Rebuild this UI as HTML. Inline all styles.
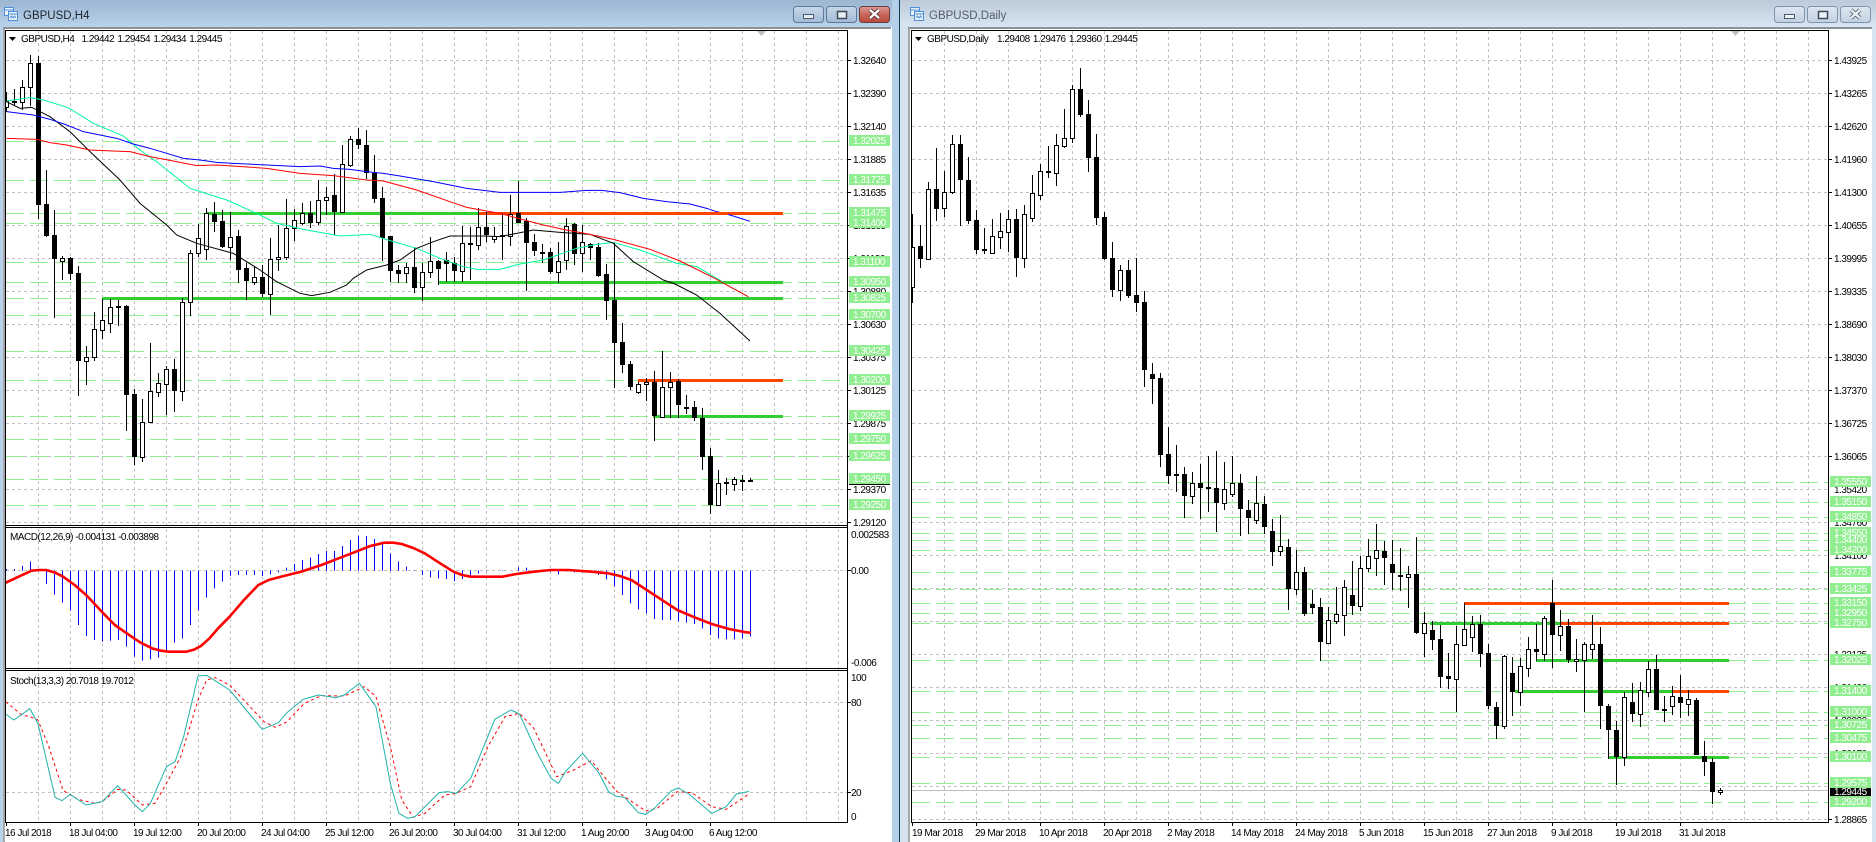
<!DOCTYPE html>
<html><head><meta charset="utf-8"><title>GBPUSD</title>
<style>
html,body{margin:0;padding:0;background:#fff;width:1876px;height:842px;overflow:hidden}
svg{display:block}
text{font-family:"Liberation Sans",Arial,sans-serif;font-size:10px;letter-spacing:-.5px;fill:#000;white-space:pre}
.t{font-size:11.5px;letter-spacing:0}
.w text,text.w{fill:#fff}
.nv{vector-effect:non-scaling-stroke}
</style></head><body>
<svg width="1876" height="842" viewBox="0 0 1876 842" xmlns="http://www.w3.org/2000/svg">
<defs>
<linearGradient id="ta" x1="0" y1="0" x2="0" y2="1"><stop offset="0" stop-color="#9cb6d3"/><stop offset="1" stop-color="#b9d2ea"/></linearGradient>
<linearGradient id="ti" x1="0" y1="0" x2="0" y2="1"><stop offset="0" stop-color="#bccad9"/><stop offset="1" stop-color="#d7e5f3"/></linearGradient>
<linearGradient id="ba" x1="0" y1="0" x2="0" y2="1"><stop offset="0" stop-color="#c6d7e8"/><stop offset=".5" stop-color="#b5c9de"/><stop offset="1" stop-color="#a2bad6"/></linearGradient>
<linearGradient id="bi" x1="0" y1="0" x2="0" y2="1"><stop offset="0" stop-color="#dde7f1"/><stop offset=".5" stop-color="#cfdce9"/><stop offset="1" stop-color="#c0d1e4"/></linearGradient>
<linearGradient id="bc" x1="0" y1="0" x2="0" y2="1"><stop offset="0" stop-color="#dc9c94"/><stop offset=".5" stop-color="#c9675c"/><stop offset="1" stop-color="#b8483c"/></linearGradient>
<clipPath id="cl"><rect x="6" y="30" width="842" height="496"/></clipPath>
<clipPath id="cr"><rect x="912" y="30" width="916" height="792"/></clipPath>
</defs>

<!-- window chrome -->
<rect x="0" y="0" width="1876" height="842" fill="#fff"/>
<rect x="0" y="0" width="892" height="27" fill="url(#ta)"/>
<rect x="0" y="27" width="3" height="815" fill="#b9d2ea"/>
<rect x="3" y="27" width="2" height="815" fill="#a4a8ad"/>
<rect x="3" y="27" width="888" height="2" fill="#8d9196"/>
<rect x="892" y="0" width="7" height="842" fill="#b6cfe8"/>
<rect x="899" y="0" width="1" height="842" fill="#0b3a56"/>
<rect x="900" y="0" width="976" height="27" fill="url(#ti)"/>
<rect x="900" y="27" width="8" height="815" fill="#d5e3f1"/>
<rect x="908" y="27" width="2" height="815" fill="#a4a8ad"/>
<rect x="908" y="27" width="964" height="2" fill="#8d9196"/>
<rect x="1872" y="27" width="4" height="815" fill="#d7e5f3"/>

<!-- title icons -->
<g fill="#eaf3fb" stroke="#4f8fd6" stroke-width="1" shape-rendering="crispEdges">
<rect x="4.5" y="7.5" width="9" height="8"/><rect x="8.5" y="11.5" width="9" height="9"/>
<rect x="910.5" y="7.5" width="9" height="8"/><rect x="914.5" y="11.5" width="9" height="9"/>
</g>
<path d="M5 10h8M9 14h8M10 18l1.500-2 1.500 2 1.500-2 1.500 2M916 18l1.500-2 1.500 2 1.500-2 1.500 2M911 10h8M915 14h8" stroke="#4f8fd6" fill="none"/>
<text class="t" x="23" y="19" style="fill:#1c2530">GBPUSD,H4</text>
<text class="t" x="929" y="19" style="fill:#555e68">GBPUSD,Daily</text>

<!-- buttons left -->
<g stroke="#5f7898">
<rect x="793.500" y="6.500" width="30" height="16" rx="3" fill="url(#ba)"/>
<rect x="826.500" y="6.500" width="30" height="16" rx="3" fill="url(#ba)"/>
<rect x="859.500" y="6.500" width="30" height="16" rx="3" fill="url(#bc)" stroke="#6e3b3b"/>
</g>
<rect x="803.500" y="14.500" width="10" height="4" fill="#e8eef4" stroke="#4a5868"/>
<rect x="837.500" y="11.500" width="9" height="7" fill="#e8eef4" stroke="#3c4a5a" stroke-width="1.500"/>
<path d="M870 10l9 8M879 10l-9 8" stroke="#4a2a2a" stroke-width="4"/>
<path d="M870 10l9 8M879 10l-9 8" stroke="#fff" stroke-width="2.500"/>
<!-- buttons right -->
<g stroke="#7f93ab">
<rect x="1774.500" y="6.500" width="30" height="16" rx="3" fill="url(#bi)"/>
<rect x="1807.500" y="6.500" width="30" height="16" rx="3" fill="url(#bi)"/>
<rect x="1840.500" y="6.500" width="30" height="16" rx="3" fill="url(#bi)"/>
</g>
<rect x="1784.500" y="14.500" width="10" height="4" fill="#eef3f8" stroke="#4a5868"/>
<rect x="1818.500" y="11.500" width="9" height="7" fill="#eef3f8" stroke="#3c4a5a" stroke-width="1.500"/>
<path d="M1851 10l9 8M1860 10l-9 8" stroke="#4a5868" stroke-width="4"/>
<path d="M1851 10l9 8M1860 10l-9 8" stroke="#eef3f8" stroke-width="2.500"/>

<!-- LEFT GRID -->
<g fill="none" stroke="#c0c0c0" stroke-dasharray="3 3" shape-rendering="crispEdges">
<path d="M6 60.500H847M6 93.500H847M6 126.500H847M6 159.500H847M6 192.500H847M6 225.500H847M6 258.500H847M6 291.500H847M6 324.500H847M6 357.500H847M6 390.500H847M6 423.500H847M6 456.500H847M6 489.500H847M6 522.500H847"/>
<path d="M6 570.500H847M6 702.500H847M6 792.500H847"/>
<path d="M38.500 31V822M70.500 31V822M102.500 31V822M134.500 31V822M166.500 31V822M198.500 31V822M230.500 31V822M262.500 31V822M294.500 31V822M326.500 31V822M358.500 31V822M390.500 31V822M422.500 31V822M454.500 31V822M486.500 31V822M518.500 31V822M550.500 31V822M582.500 31V822M614.500 31V822M646.500 31V822M678.500 31V822M710.500 31V822M742.500 31V822M774.500 31V822M806.500 31V822M838.500 31V822"/>
</g>
<!-- LEFT green dashed -->
<path fill="none" stroke="#90ee90" stroke-dasharray="18 6" shape-rendering="crispEdges" d="M6 141.500H846M6 180.500H846M6 213.500H846M6 223.500H846M6 262.500H846M6 282.500H846M6 298.500H846M6 315.500H846M6 351.500H846M6 380.500H846M6 416.500H846M6 439.500H846M6 456.500H846M6 479.500H846M6 505.500H846"/>
<!-- LEFT thick levels -->
<g fill="none" stroke-width="3" shape-rendering="crispEdges">
<path stroke="#32cd32" d="M207 213.500H479M438 282.500H783M102 298.500H783M653 416.500H783"/>
<path stroke="#ff4500" d="M479 213.500H783M638 380.500H783"/>
</g>
<!-- LEFT candles -->
<g clip-path="url(#cl)" shape-rendering="crispEdges" fill="none">
<path stroke="#000" d="M6.500 92V112M14.500 89V105M22.500 80V110M30.500 55V106M38.500 56V219M46.500 170V237M54.500 210V318M62.500 256V280M70.500 257V280M78.500 266V396M86.500 346V385M94.500 312V361M102.500 299V339M110.500 299V333M118.500 300V326M126.500 305V431M134.500 389V465M142.500 399V462M150.500 343V423M158.500 373V397M166.500 366V415M174.500 359V412M182.500 298V401M190.500 250V316M198.500 224V257M206.500 208V260M214.500 202V232M222.500 210V248M230.500 212V260M238.500 230V283M246.500 263V300M254.500 266V285M262.500 265V297M270.500 238V315M278.500 225V271M286.500 199V260M294.500 209V241M302.500 203V225M310.500 201V228M318.500 180V225M326.500 187V215M334.500 174V235M342.500 145V213M350.500 136V167M358.500 128V149M366.500 130V179M374.500 155V203M382.500 187V261M390.500 236V282M398.500 265V283M406.500 263V283M414.500 247V293M422.500 263V301M430.500 237V278M438.500 260V285M446.500 252V282M454.500 257V282M462.500 226V282M470.500 227V280M478.500 208V250M486.500 212V242M494.500 227V243M502.500 213V260M510.500 195V246M518.500 181V223M526.500 218V291M534.500 234V256M542.500 244V263M550.500 248V274M558.500 242V283M566.500 218V270M574.500 223V265M582.500 225V272M590.500 243V260M598.500 243V277M606.500 264V320M614.500 243V388M622.500 323V373M630.500 361V390M638.500 382V394M646.500 378V401M654.500 371V441M662.500 351V418M670.500 372V418M678.500 379V418M686.500 395V414M694.500 401V421M702.500 408V470M710.500 448V514M718.500 470V506M726.500 478V495M734.500 477V491M742.500 475V491M750.500 478V482"/>
<path stroke="#000" stroke-width="5" d="M14.500 101V103M38.500 63V205M46.500 204V236M54.500 235V259M70.500 258V274M78.500 273V361M118.500 306V308M126.500 306V395M134.500 394V457M174.500 369V391M214.500 214V222M222.500 221V247M238.500 236V270M246.500 268V281M262.500 277V294M310.500 213V223M334.500 195V212M358.500 139V145M366.500 145V173M374.500 173V199M382.500 198V238M390.500 236V271M398.500 270V274M414.500 267V288M438.500 261V269M446.500 260V264M454.500 263V271M470.500 243V245M486.500 227V235M502.500 235V237M518.500 213V223M526.500 221V243M534.500 242V251M542.500 252V254M550.500 252V272M574.500 224V254M590.500 244V248M598.500 247V276M606.500 274V301M614.500 300V343M622.500 342V365M630.500 364V387M654.500 382V416M678.500 381V405M686.500 407V409M694.500 407V418M702.500 418V457M710.500 456V505M726.500 482V484M742.500 480V482M750.500 480V482"/>
<path stroke="#000" fill="#fff" d="M4.500 101.500h4V107.500h-4zM20.500 87.500h4V102.500h-4zM28.500 63.500h4V87.500h-4zM60.500 258.500h4V261.500h-4zM84.500 357.500h4V361.500h-4zM92.500 329.500h4V357.500h-4zM100.500 320.500h4V330.500h-4zM108.500 307.500h4V323.500h-4zM140.500 422.500h4V457.500h-4zM148.500 391.500h4V422.500h-4zM156.500 383.500h4V392.500h-4zM164.500 369.500h4V384.500h-4zM180.500 302.500h4V391.500h-4zM188.500 253.500h4V302.500h-4zM196.500 238.500h4V253.500h-4zM204.500 213.500h4V249.500h-4zM228.500 237.500h4V247.500h-4zM252.500 277.500h4V282.500h-4zM268.500 259.500h4V294.500h-4zM276.500 257.500h4V259.500h-4zM284.500 228.500h4V257.500h-4zM292.500 220.500h4V228.500h-4zM300.500 213.500h4V223.500h-4zM316.500 200.500h4V222.500h-4zM324.500 197.500h4V200.500h-4zM340.500 164.500h4V212.500h-4zM348.500 139.500h4V165.500h-4zM404.500 267.500h4V273.500h-4zM420.500 272.500h4V287.500h-4zM428.500 261.500h4V272.500h-4zM460.500 243.500h4V271.500h-4zM476.500 227.500h4V245.500h-4zM492.500 236.500h4V239.500h-4zM508.500 214.500h4V236.500h-4zM556.500 261.500h4V272.500h-4zM564.500 226.500h4V260.500h-4zM580.500 242.500h4V253.500h-4zM636.500 384.500h4V392.500h-4zM644.500 382.500h4V384.500h-4zM660.500 387.500h4V417.500h-4zM668.500 382.500h4V387.500h-4zM716.500 483.500h4V505.500h-4zM732.500 479.500h4V484.500h-4z"/>
</g>
<!-- LEFT MAs (coords in 3x crop space) -->
<g transform="scale(.33333)" fill="none" stroke-width="1">
<polyline class="nv" stroke="#00fa9a" points="20,303 90,293 130,300 205,323 280,370 370,408 420,450 470,485 520,525 570,565 680,600 780,645 830,670 920,690 1020,708 1110,703 1180,725 1250,745 1320,775 1390,800 1430,808 1500,808 1560,792 1630,780 1730,745 1790,733 1840,727 1920,750 2030,790 2090,800 2150,835 2160,840 2180,855 2245,890"/>
<polyline class="nv" stroke="#000" points="20,305 60,325 95,322 150,350 210,395 270,455 360,540 420,610 500,675 530,705 590,730 700,760 780,810 830,845 900,880 935,887 990,877 1040,855 1060,835 1100,810 1160,795 1200,780 1250,745 1300,725 1350,708 1450,708 1500,710 1550,700 1600,690 1680,697 1770,703 1840,730 1900,785 1990,840 2025,852 2090,885 2160,940 2250,1023"/>
<polyline class="nv" stroke="#f00" points="20,415 110,418 150,428 200,435 270,450 390,455 450,470 520,483 590,497 650,495 800,505 900,520 1000,527 1100,540 1150,543 1250,570 1350,605 1400,622 1460,633 1500,640 1580,662 1630,675 1690,688 1770,703 1840,718 1950,748 2040,783 2150,838 2180,855 2245,890"/>
<polyline class="nv" stroke="#00f" points="20,335 100,345 150,358 200,375 250,395 300,405 350,415 400,432 450,445 500,460 550,475 600,480 650,487 700,490 800,495 900,500 960,498 1000,505 1050,508 1100,515 1150,520 1200,528 1300,545 1400,565 1500,577 1680,577 1760,571 1805,571 1860,578 1930,595 2000,605 2070,612 2120,625 2150,635 2190,645 2250,664"/>
</g>
<!-- re-draw orange on top of blue gap -->
<path stroke="#ff4500" stroke-width="3" shape-rendering="crispEdges" d="M700 213.500H728"/>
<path d="M757 31h9l-4.500 5z" fill="#c0c0c0"/>
<path d="M9 37h7l-3.500 4z" fill="#000"/>
<text x="21" y="42" style="letter-spacing:-.5px">GBPUSD,H4</text>
<text x="81.500" y="42" style="word-spacing:1px">1.29442 1.29454 1.29434 1.29445</text>

<!-- MACD -->
<g transform="translate(0,520) scale(1,.33333)" fill="none" stroke="#00f" shape-rendering="crispEdges">
<path d="M6.500 152V147M14.500 152V147M22.500 152V138M30.500 152V125M38.500 152V150M46.500 152V192M54.500 152V224M62.500 152V248M70.500 152V272M78.500 152V315M86.500 152V348M94.500 152V360M102.500 152V365M110.500 152V362M118.500 152V360M126.500 152V380M134.500 152V410M142.500 152V422M150.500 152V418M158.500 152V413M166.500 152V398M174.500 152V368M182.500 152V355M190.500 152V315M198.500 152V272M206.500 152V233M214.500 152V205M222.500 152V185M230.500 152V167M238.500 152V165M246.500 152V165M254.500 152V165M262.500 152V168M270.500 152V163M278.500 152V157M286.500 152V143M294.500 152V132M302.500 152V120M310.500 152V113M318.500 152V102M326.500 152V93M334.500 152V93M342.500 152V78M350.500 152V60M358.500 152V47M366.500 152V48M374.500 152V57M382.500 152V70M390.500 152V100M398.500 152V125M406.500 152V140M414.500 152V150M422.500 152V165M430.500 152V172M438.500 152V175M446.500 152V177M454.500 152V183M462.500 152V177M470.500 152V170M478.500 152V160M486.500 152V153M502.500 152V150M510.500 152V152M518.500 152V142M526.500 152V143M542.500 152V153M550.500 152V155M558.500 152V163M566.500 152V155M574.500 152V157M582.500 152V157M590.500 152V158M598.500 152V165M606.500 152V178M614.500 152V200M622.500 152V225M630.500 152V250M638.500 152V268M646.500 152V280M654.500 152V297M662.500 152V300M670.500 152V300M678.500 152V305M686.500 152V308M694.500 152V312M702.500 152V325M710.500 152V345M718.500 152V355M726.500 152V358M734.500 152V358M742.500 152V355M750.500 152V350"/>
</g>
<g transform="translate(0,520) scale(.574,.33333)" fill="none" stroke-linejoin="round">
<polyline class="nv" stroke="#f00" stroke-width="2.600" points="10,188 30,172 55,152 68,150 80,150 95,157 110,170 130,195 150,225 165,252 180,280 200,315 225,345 245,368 265,385 280,392 295,395 325,395 338,389 350,378 365,355 380,325 400,290 425,240 450,195 468,180 490,170 525,155 560,135 590,115 620,95 645,78 670,68 685,68 700,72 720,84 740,100 765,128 790,155 805,165 820,170 875,170 900,162 930,155 960,150 990,150 1030,155 1060,160 1080,168 1100,180 1140,225 1180,270 1210,292 1240,312 1270,327 1300,337 1308,338"/>
<!-- Stoch -->
<polyline class="nv" stroke="#f00" stroke-width="1" stroke-dasharray="3 3" points="10,545 38,585 52,590 66,600 85,680 110,812 136,838 165,850 178,845 205,808 220,810 248,855 270,850 290,790 315,710 345,540 360,480 375,473 400,495 430,550 460,605 480,622 500,605 530,550 560,527 600,528 635,500 655,530 680,680 700,840 720,892 740,880 775,825 795,820 820,800 850,680 880,590 905,580 930,625 970,770 1000,750 1030,722 1050,765 1075,815 1125,873 1145,865 1180,815 1205,818 1240,860 1265,868 1305,822"/>
<polyline class="nv" stroke="#20b2aa" stroke-width="1" points="10,582 24,600 52,566 66,610 96,832 108,842 122,823 150,855 178,845 205,797 235,855 248,875 262,850 290,740 305,725 320,650 345,468 360,466 400,510 457,628 485,608 500,578 528,538 555,525 585,533 600,525 626,490 655,560 680,790 695,880 710,895 723,890 765,818 780,815 795,820 820,775 862,598 890,570 905,582 935,695 960,775 973,790 985,755 1015,700 1043,758 1060,815 1072,828 1088,832 1112,878 1125,883 1140,865 1170,812 1182,804 1200,822 1240,880 1265,860 1283,822 1305,814"/>
</g>
<text x="10" y="540" style="word-spacing:0">MACD(12,26,9) -0.004131 -0.003898</text>
<text x="10" y="684">Stoch(13,3,3) 20.7018 19.7012</text>

<!-- LEFT frame -->
<path fill="none" stroke="#000" shape-rendering="crispEdges" d="M5.500 30.500H847.500V822.500H5.500zM5.500 525.500H847.500M5.500 527.500H847.500M5.500 668.500H847.500M5.500 670.500H847.500"/>
<!-- LEFT ticks -->
<path stroke="#000" fill="none" shape-rendering="crispEdges" d="M848 60.500h3M848 93.500h3M848 126.500h3M848 159.500h3M848 192.500h3M848 225.500h3M848 258.500h3M848 291.500h3M848 324.500h3M848 357.500h3M848 390.500h3M848 423.500h3M848 456.500h3M848 489.500h3M848 522.500h3M848 570.500h3M848 702.500h3M848 792.500h3M6.500 823v3M70.500 823v3M134.500 823v3M198.500 823v3M262.500 823v3M326.500 823v3M390.500 823v3M454.500 823v3M518.500 823v3M582.500 823v3M646.500 823v3M710.500 823v3"/>
<!-- LEFT axis -->
<g>
<text x="853" y="64">1.32640</text><text x="853" y="97">1.32390</text><text x="853" y="130">1.32140</text><text x="853" y="163">1.31885</text><text x="853" y="196">1.31635</text><text x="853" y="229">1.31385</text><text x="853" y="262">1.31130</text><text x="853" y="295">1.30880</text><text x="853" y="328">1.30630</text><text x="853" y="361">1.30375</text><text x="853" y="394">1.30125</text><text x="853" y="427">1.29875</text><text x="853" y="460">1.29620</text><text x="853" y="493">1.29370</text><text x="853" y="526">1.29120</text>
<text x="851" y="538">0.002583</text><text x="851" y="574">0.00</text><text x="851" y="666">-0.006</text>
<text x="851" y="681">100</text><text x="851" y="706">80</text><text x="851" y="796">20</text><text x="851" y="820">0</text>
</g>
<path stroke="#000" shape-rendering="crispEdges" d="M849 484.500H890"/>
<g fill="#90ee90">
<rect x="849" y="135" width="41" height="11"/><rect x="849" y="174" width="41" height="11"/><rect x="849" y="207" width="41" height="11"/><rect x="849" y="217" width="41" height="11"/><rect x="849" y="256" width="41" height="11"/><rect x="849" y="276" width="41" height="11"/><rect x="849" y="292" width="41" height="11"/><rect x="849" y="309" width="41" height="11"/><rect x="849" y="345" width="41" height="11"/><rect x="849" y="374" width="41" height="11"/><rect x="849" y="410" width="41" height="11"/><rect x="849" y="433" width="41" height="11"/><rect x="849" y="450" width="41" height="11"/><rect x="849" y="473" width="41" height="11"/><rect x="849" y="499" width="41" height="11"/>
</g>
<g class="w">
<text x="853" y="144">1.32025</text><text x="853" y="183">1.31725</text><text x="853" y="216">1.31475</text><text x="853" y="226">1.31400</text><text x="853" y="265">1.31100</text><text x="853" y="285">1.30950</text><text x="853" y="301">1.30825</text><text x="853" y="318">1.30700</text><text x="853" y="354">1.30425</text><text x="853" y="383">1.30200</text><text x="853" y="419">1.29925</text><text x="853" y="442">1.29750</text><text x="853" y="459">1.29625</text><text x="853" y="482">1.29450</text><text x="853" y="508">1.29250</text>
</g>
<g>
<text x="5" y="836">16 Jul 2018</text><text x="69" y="836">18 Jul 04:00</text><text x="133" y="836">19 Jul 12:00</text><text x="197" y="836">20 Jul 20:00</text><text x="261" y="836">24 Jul 04:00</text><text x="325" y="836">25 Jul 12:00</text><text x="389" y="836">26 Jul 20:00</text><text x="453" y="836">30 Jul 04:00</text><text x="517" y="836">31 Jul 12:00</text><text x="581" y="836">1 Aug 20:00</text><text x="645" y="836">3 Aug 04:00</text><text x="709" y="836">6 Aug 12:00</text>
</g>

<!-- RIGHT GRID -->
<g fill="none" stroke="#c0c0c0" stroke-dasharray="3 3" shape-rendering="crispEdges">
<path d="M912 60.500H1828M912 93.500H1828M912 126.500H1828M912 159.500H1828M912 192.500H1828M912 225.500H1828M912 258.500H1828M912 291.500H1828M912 324.500H1828M912 357.500H1828M912 390.500H1828M912 423.500H1828M912 456.500H1828M912 489.500H1828M912 522.500H1828M912 555.500H1828M912 588.500H1828M912 621.500H1828M912 654.500H1828M912 687.500H1828M912 720.500H1828M912 753.500H1828M912 786.500H1828M912 819.500H1828"/>
<path d="M944.500 31V822M976.500 31V822M1008.500 31V822M1040.500 31V822M1072.500 31V822M1104.500 31V822M1136.500 31V822M1168.500 31V822M1200.500 31V822M1232.500 31V822M1264.500 31V822M1296.500 31V822M1328.500 31V822M1360.500 31V822M1392.500 31V822M1424.500 31V822M1456.500 31V822M1488.500 31V822M1520.500 31V822M1552.500 31V822M1584.500 31V822M1616.500 31V822M1648.500 31V822M1680.500 31V822M1712.500 31V822M1744.500 31V822M1776.500 31V822M1808.500 31V822"/>
</g>
<path fill="none" stroke="#90ee90" stroke-dasharray="18 6" shape-rendering="crispEdges" d="M912 482.500H1828M912 502.500H1828M912 517.500H1828M912 533.500H1828M912 540.500H1828M912 550.500H1828M912 572.500H1828M912 589.500H1828M912 603.500H1828M912 613.500H1828M912 623.500H1828M912 660.500H1828M912 691.500H1828M912 712.500H1828M912 725.500H1828M912 738.500H1828M912 757.500H1828M912 783.500H1828M912 802.500H1828"/>
<path fill="none" stroke="#c0c0c0" shape-rendering="crispEdges" d="M912 790.500H1828"/>
<g fill="none" stroke-width="3" shape-rendering="crispEdges">
<path stroke="#32cd32" d="M1430 623.500H1560M1536 660.500H1729M1515 691.500H1673M1608 757.500H1729"/>
<path stroke="#ff4500" d="M1464 603.500H1729M1560 623.500H1729M1673 691.500H1729"/>
</g>
<!-- RIGHT candles -->
<g clip-path="url(#cr)" shape-rendering="crispEdges" fill="none">
<path stroke="#000" d="M912.500 214V303M920.500 225V268M928.500 182V259M936.500 148V221M944.500 171V217M952.500 135V194M960.500 135V226M968.500 157V224M976.500 210V254M984.500 228V254M992.500 219V254M1000.500 213V249M1008.500 210V252M1016.500 209V277M1024.500 205V268M1032.500 175V222M1040.500 164V200M1048.500 146V178M1056.500 134V186M1064.500 109V148M1072.500 85V143M1080.500 68V117M1088.500 100V172M1096.500 134V225M1104.500 212V260M1112.500 242V297M1120.500 265V301M1128.500 260V298M1136.500 258V312M1144.500 291V387M1152.500 363V404M1160.500 373V467M1168.500 427V484M1176.500 445V492M1184.500 467V518M1192.500 472V504M1200.500 464V519M1208.500 456V512M1216.500 451V532M1224.500 462V510M1232.500 456V497M1240.500 474V536M1248.500 500V534M1256.500 476V524M1264.500 496V534M1272.500 519V566M1280.500 515V556M1288.500 539V610M1296.500 550V595M1304.500 567V616M1312.500 590V614M1320.500 598V661M1328.500 607V644M1336.500 587V624M1344.500 580V636M1352.500 561V615M1360.500 556V611M1368.500 539V572M1376.500 524V576M1384.500 541V585M1392.500 540V590M1400.500 548V591M1408.500 566V608M1416.500 537V634M1424.500 612V657M1432.500 621V650M1440.500 625V688M1448.500 653V689M1456.500 626V712M1464.500 603V646M1472.500 616V652M1480.500 615V667M1488.500 644V709M1496.500 702V739M1504.500 655V729M1512.500 657V716M1520.500 658V706M1528.500 637V677M1536.500 624V661M1544.500 616V661M1552.500 580V668M1560.500 610V651M1568.500 619V663M1576.500 639V672M1584.500 642V712M1592.500 615V659M1600.500 627V729M1608.500 704V759M1616.500 721V785M1624.500 692V766M1632.500 683V722M1640.500 682V727M1648.500 661V697M1656.500 655V710M1664.500 696V722M1672.500 686V715M1680.500 675V718M1688.500 690V716M1696.500 698V755M1704.500 741V776M1712.500 758V804M1720.500 788V795"/>
<path stroke="#000" stroke-width="5" d="M920.500 246V259M936.500 189V209M960.500 144V180M968.500 180V221M976.500 220V250M984.500 249V251M1016.500 219V258M1048.500 171V173M1080.500 89V115M1088.500 114V158M1096.500 157V218M1104.500 217V259M1112.500 258V290M1128.500 270V296M1136.500 295V303M1144.500 302V370M1152.500 374V379M1160.500 378V455M1168.500 454V476M1176.500 474V476M1184.500 474V496M1200.500 483V488M1208.500 487V489M1216.500 488V503M1240.500 483V509M1248.500 510V518M1264.500 504V527M1272.500 531V552M1288.500 547V589M1304.500 572V614M1312.500 604V608M1320.500 607V642M1352.500 595V606M1384.500 551V558M1392.500 564V573M1400.500 575V577M1416.500 574V633M1432.500 630V640M1440.500 639V677M1448.500 676V679M1480.500 624V654M1488.500 653V706M1496.500 707V726M1512.500 673V692M1536.500 649V652M1552.500 603V635M1568.500 626V660M1600.500 644V706M1608.500 706V730M1616.500 730V757M1632.500 702V714M1656.500 669V710M1664.500 709V711M1680.500 697V703M1696.500 700V755M1704.500 756V762M1712.500 762V792"/>
<path stroke="#000" fill="#fff" d="M910.500 247.500h4V287.500h-4zM926.500 189.500h4V259.500h-4zM942.500 192.500h4V208.500h-4zM950.500 144.500h4V192.500h-4zM990.500 236.500h4V253.500h-4zM998.500 231.500h4V237.500h-4zM1006.500 219.500h4V232.500h-4zM1022.500 214.500h4V258.500h-4zM1030.500 193.500h4V218.500h-4zM1038.500 171.500h4V195.500h-4zM1054.500 145.500h4V173.500h-4zM1062.500 138.500h4V146.500h-4zM1070.500 89.500h4V138.500h-4zM1118.500 270.500h4V290.500h-4zM1190.500 483.500h4V496.500h-4zM1222.500 489.500h4V503.500h-4zM1230.500 483.500h4V494.500h-4zM1254.500 503.500h4V520.500h-4zM1278.500 546.500h4V551.500h-4zM1294.500 572.500h4V589.500h-4zM1326.500 620.500h4V643.500h-4zM1334.500 614.500h4V621.500h-4zM1342.500 587.500h4V615.500h-4zM1358.500 568.500h4V606.500h-4zM1366.500 556.500h4V568.500h-4zM1374.500 550.500h4V558.500h-4zM1406.500 574.500h4V577.500h-4zM1422.500 623.500h4V633.500h-4zM1454.500 644.500h4V679.500h-4zM1462.500 629.500h4V645.500h-4zM1470.500 624.500h4V637.500h-4zM1502.500 656.500h4V726.500h-4zM1518.500 666.500h4V692.500h-4zM1526.500 649.500h4V668.500h-4zM1542.500 618.500h4V654.500h-4zM1558.500 626.500h4V635.500h-4zM1574.500 659.500h4V661.500h-4zM1582.500 644.500h4V660.500h-4zM1590.500 644.500h4V649.500h-4zM1622.500 697.500h4V757.500h-4zM1638.500 690.500h4V714.500h-4zM1646.500 669.500h4V692.500h-4zM1670.500 696.500h4V706.500h-4zM1686.500 699.500h4V704.500h-4zM1718.500 790.500h4V792.500h-4z"/>
</g>
<path d="M1731 31h9l-4.500 5z" fill="#c0c0c0"/>
<path d="M915 37h7l-3.500 4z" fill="#000"/>
<text x="927" y="42">GBPUSD,Daily</text>
<text x="997" y="42" style="word-spacing:1px">1.29408 1.29476 1.29360 1.29445</text>
<path fill="none" stroke="#000" shape-rendering="crispEdges" d="M911.500 30.500H1828.500V822.500H911.500z"/>
<path stroke="#000" fill="none" shape-rendering="crispEdges" d="M1829 60.500h3M1829 93.500h3M1829 126.500h3M1829 159.500h3M1829 192.500h3M1829 225.500h3M1829 258.500h3M1829 291.500h3M1829 324.500h3M1829 357.500h3M1829 390.500h3M1829 423.500h3M1829 456.500h3M1829 819.500h3M912.500 823v3M976.500 823v3M1040.500 823v3M1104.500 823v3M1168.500 823v3M1232.500 823v3M1296.500 823v3M1360.500 823v3M1424.500 823v3M1488.500 823v3M1552.500 823v3M1616.500 823v3M1680.500 823v3"/>
<g>
<text x="1834" y="64">1.43925</text><text x="1834" y="97">1.43265</text><text x="1834" y="130">1.42620</text><text x="1834" y="163">1.41960</text><text x="1834" y="196">1.41300</text><text x="1834" y="229">1.40655</text><text x="1834" y="262">1.39995</text><text x="1834" y="295">1.39335</text><text x="1834" y="328">1.38690</text><text x="1834" y="361">1.38030</text><text x="1834" y="394">1.37370</text><text x="1834" y="427">1.36725</text><text x="1834" y="460">1.36065</text><text x="1834" y="493">1.35420</text><text x="1834" y="526">1.34760</text><text x="1834" y="559">1.34100</text><text x="1834" y="592">1.33455</text><text x="1834" y="625">1.32790</text><text x="1834" y="658">1.32135</text><text x="1834" y="691">1.31480</text><text x="1834" y="724">1.30830</text><text x="1834" y="757">1.30170</text><text x="1834" y="790">1.29525</text><text x="1834" y="823">1.28865</text>
</g>
<g fill="#90ee90">
<rect x="1830" y="476" width="41" height="11"/><rect x="1830" y="496" width="41" height="11"/><rect x="1830" y="511" width="41" height="11"/><rect x="1830" y="527" width="41" height="11"/><rect x="1830" y="534" width="41" height="11"/><rect x="1830" y="544" width="41" height="11"/><rect x="1830" y="566" width="41" height="11"/><rect x="1830" y="583" width="41" height="11"/><rect x="1830" y="597" width="41" height="11"/><rect x="1830" y="607" width="41" height="11"/><rect x="1830" y="617" width="41" height="11"/><rect x="1830" y="654" width="41" height="11"/><rect x="1830" y="685" width="41" height="11"/><rect x="1830" y="706" width="41" height="11"/><rect x="1830" y="719" width="41" height="11"/><rect x="1830" y="732" width="41" height="11"/><rect x="1830" y="751" width="41" height="11"/><rect x="1830" y="777" width="41" height="11"/><rect x="1830" y="796" width="41" height="11"/>
</g>
<g class="w">
<text x="1834" y="485">1.35550</text><text x="1834" y="505">1.35150</text><text x="1834" y="520">1.34850</text><text x="1834" y="536">1.34550</text><text x="1834" y="543">1.34400</text><text x="1834" y="553">1.34200</text><text x="1834" y="575">1.33775</text><text x="1834" y="592">1.33425</text><text x="1834" y="606">1.33150</text><text x="1834" y="616">1.32950</text><text x="1834" y="626">1.32750</text><text x="1834" y="663">1.32025</text><text x="1834" y="694">1.31400</text><text x="1834" y="715">1.31000</text><text x="1834" y="728">1.30725</text><text x="1834" y="741">1.30475</text><text x="1834" y="760">1.30100</text><text x="1834" y="786">1.29575</text><text x="1834" y="805">1.29200</text>
</g>
<rect x="1830" y="788" width="41" height="8" fill="#000"/>
<text class="w" x="1834" y="795">1.29445</text>
<g>
<text x="912" y="836">19 Mar 2018</text><text x="975" y="836">29 Mar 2018</text><text x="1039" y="836">10 Apr 2018</text><text x="1103" y="836">20 Apr 2018</text><text x="1167" y="836">2 May 2018</text><text x="1231" y="836">14 May 2018</text><text x="1295" y="836">24 May 2018</text><text x="1359" y="836">5 Jun 2018</text><text x="1423" y="836">15 Jun 2018</text><text x="1487" y="836">27 Jun 2018</text><text x="1551" y="836">9 Jul 2018</text><text x="1615" y="836">19 Jul 2018</text><text x="1679" y="836">31 Jul 2018</text>
</g>
</svg>
</body></html>
